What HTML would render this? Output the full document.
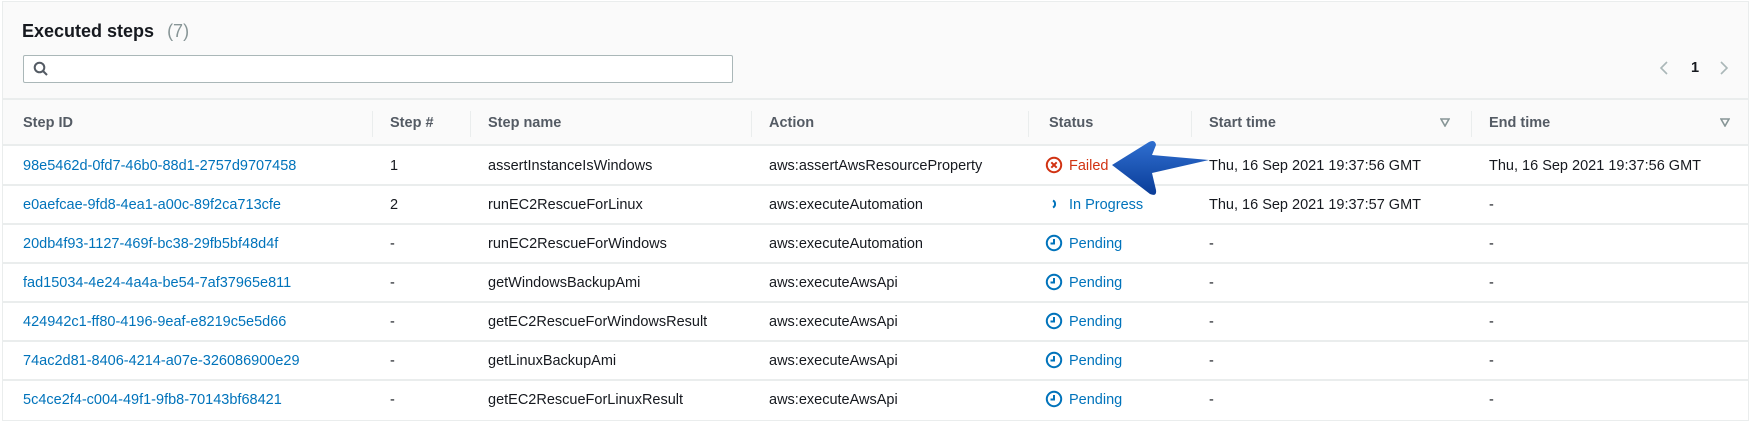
<!DOCTYPE html>
<html><head><meta charset="utf-8"><style>
*{margin:0;padding:0;box-sizing:border-box}
body{width:1750px;height:417px;overflow:hidden;background:#fff;font-family:"Liberation Sans",sans-serif;font-size:14.5px;color:#16191f;position:relative}
.frame{position:absolute;left:2px;top:1px;width:1747px;height:420px;border:1px solid #eaeded;background:#fff}
.top{position:absolute;left:3px;top:2px;width:1745px;height:143px;background:#fafafa}
.abs{position:absolute;white-space:nowrap}
.hline{position:absolute;left:3px;width:1745px;height:2px;background:#eaeded}
.th{font-weight:bold;color:#545b64;top:115px}
.vd{position:absolute;top:111px;width:1px;height:26px;background:#eaeded}
.link{color:#0073bb}
</style></head><body>
<div class="frame"></div>
<div class="top"></div>
<div class="abs" style="left:22px;top:21px;font-size:18px;font-weight:bold">Executed steps <span style="font-weight:normal;color:#879596;margin-left:8px">(7)</span></div>
<div class="abs" style="left:23px;top:55px;width:710px;height:28px;border:1px solid #aab7b8;border-radius:2px;background:#fff"></div>
<svg class="abs" style="left:33px;top:61px" width="16" height="16" viewBox="0 0 16 16"><circle cx="6.5" cy="6.5" r="4.8" fill="none" stroke="#545b64" stroke-width="2"/><line x1="10" y1="10" x2="14" y2="14" stroke="#545b64" stroke-width="2"/></svg>
<svg class="abs" style="left:1658px;top:60px" width="12" height="16"><polyline points="9,2 3,8 9,14" fill="none" stroke="#aab7b8" stroke-width="1.6"/></svg>
<div class="abs" style="left:1691px;top:60px;font-weight:bold">1</div>
<svg class="abs" style="left:1718px;top:60px" width="12" height="16"><polyline points="3,2 9,8 3,14" fill="none" stroke="#aab7b8" stroke-width="1.6"/></svg>
<div class="hline" style="top:98px"></div>
<div class="abs th" style="left:23px">Step ID</div>
<div class="abs th" style="left:390px">Step #</div>
<div class="abs th" style="left:488px">Step name</div>
<div class="abs th" style="left:769px">Action</div>
<div class="abs th" style="left:1049px">Status</div>
<div class="abs th" style="left:1209px">Start time</div>
<div class="abs th" style="left:1489px">End time</div>
<div class="vd" style="left:372px"></div><div class="vd" style="left:470px"></div><div class="vd" style="left:751px"></div><div class="vd" style="left:1028px"></div><div class="vd" style="left:1191px"></div><div class="vd" style="left:1471px"></div>
<svg class="abs" style="left:1440px;top:118px" width="10" height="9"><polygon points="1,1 9,1 5,8" fill="none" stroke="#879596" stroke-width="1.6"/></svg>
<svg class="abs" style="left:1720px;top:118px" width="10" height="9"><polygon points="1,1 9,1 5,8" fill="none" stroke="#879596" stroke-width="1.6"/></svg>
<div class="hline" style="top:144px"></div>
<div class="hline" style="top:184px"></div>
<div class="hline" style="top:223px"></div>
<div class="hline" style="top:262px"></div>
<div class="hline" style="top:301px"></div>
<div class="hline" style="top:340px"></div>
<div class="hline" style="top:379px"></div>

<div class="abs link" style="left:23px;top:158px">98e5462d-0fd7-46b0-88d1-2757d9707458</div>
<div class="abs" style="left:390px;top:158px">1</div>
<div class="abs" style="left:488px;top:158px">assertInstanceIsWindows</div>
<div class="abs" style="left:769px;top:158px">aws:assertAwsResourceProperty</div>
<svg class="abs" style="left:1045px;top:156px" width="18" height="18"><circle cx="9" cy="9" r="7.2" fill="none" stroke="#d13212" stroke-width="2"/><path d="M6.3 6.3L11.7 11.7M11.7 6.3L6.3 11.7" stroke="#d13212" stroke-width="2"/></svg>
<div class="abs" style="left:1069px;top:158px;color:#d13212">Failed</div>
<div class="abs" style="left:1209px;top:158px">Thu, 16 Sep 2021 19:37:56 GMT</div>
<div class="abs" style="left:1489px;top:158px">Thu, 16 Sep 2021 19:37:56 GMT</div>

<div class="abs link" style="left:23px;top:197px">e0aefcae-9fd8-4ea1-a00c-89f2ca713cfe</div>
<div class="abs" style="left:390px;top:197px">2</div>
<div class="abs" style="left:488px;top:197px">runEC2RescueForLinux</div>
<div class="abs" style="left:769px;top:197px">aws:executeAutomation</div>
<svg class="abs" style="left:1050px;top:197px" width="10" height="14"><path d="M3 3.5A4 4 0 0 1 3 10.5" fill="none" stroke="#0073bb" stroke-width="2"/></svg>
<div class="abs link" style="left:1069px;top:197px">In Progress</div>
<div class="abs" style="left:1209px;top:197px">Thu, 16 Sep 2021 19:37:57 GMT</div>
<div class="abs" style="left:1489px;top:197px">-</div>

<div class="abs link" style="left:23px;top:236px">20db4f93-1127-469f-bc38-29fb5bf48d4f</div>
<div class="abs link" style="left:23px;top:275px">fad15034-4e24-4a4a-be54-7af37965e811</div>
<div class="abs link" style="left:23px;top:314px">424942c1-ff80-4196-9eaf-e8219c5e5d66</div>
<div class="abs link" style="left:23px;top:353px">74ac2d81-8406-4214-a07e-326086900e29</div>
<div class="abs link" style="left:23px;top:392px">5c4ce2f4-c004-49f1-9fb8-70143bf68421</div>
<div class="abs" style="left:488px;top:236px">runEC2RescueForWindows</div>
<div class="abs" style="left:488px;top:275px">getWindowsBackupAmi</div>
<div class="abs" style="left:488px;top:314px">getEC2RescueForWindowsResult</div>
<div class="abs" style="left:488px;top:353px">getLinuxBackupAmi</div>
<div class="abs" style="left:488px;top:392px">getEC2RescueForLinuxResult</div>
<div class="abs" style="left:769px;top:236px">aws:executeAutomation</div>
<div class="abs" style="left:769px;top:275px">aws:executeAwsApi</div>
<div class="abs" style="left:769px;top:314px">aws:executeAwsApi</div>
<div class="abs" style="left:769px;top:353px">aws:executeAwsApi</div>
<div class="abs" style="left:769px;top:392px">aws:executeAwsApi</div>
<div class="abs" style="left:390px;top:236px">-</div><div class="abs" style="left:1209px;top:236px">-</div><div class="abs" style="left:1489px;top:236px">-</div>
<div class="abs" style="left:390px;top:275px">-</div><div class="abs" style="left:1209px;top:275px">-</div><div class="abs" style="left:1489px;top:275px">-</div>
<div class="abs" style="left:390px;top:314px">-</div><div class="abs" style="left:1209px;top:314px">-</div><div class="abs" style="left:1489px;top:314px">-</div>
<div class="abs" style="left:390px;top:353px">-</div><div class="abs" style="left:1209px;top:353px">-</div><div class="abs" style="left:1489px;top:353px">-</div>
<div class="abs" style="left:390px;top:392px">-</div><div class="abs" style="left:1209px;top:392px">-</div><div class="abs" style="left:1489px;top:392px">-</div>

<svg class="abs" style="left:1045px;top:234px" width="18" height="18"><circle cx="9" cy="9" r="7.2" fill="none" stroke="#0073bb" stroke-width="2"/><path d="M9 5V9.5H5.5" fill="none" stroke="#0073bb" stroke-width="2"/></svg>
<div class="abs link" style="left:1069px;top:236px">Pending</div>
<svg class="abs" style="left:1045px;top:273px" width="18" height="18"><circle cx="9" cy="9" r="7.2" fill="none" stroke="#0073bb" stroke-width="2"/><path d="M9 5V9.5H5.5" fill="none" stroke="#0073bb" stroke-width="2"/></svg>
<div class="abs link" style="left:1069px;top:275px">Pending</div>
<svg class="abs" style="left:1045px;top:312px" width="18" height="18"><circle cx="9" cy="9" r="7.2" fill="none" stroke="#0073bb" stroke-width="2"/><path d="M9 5V9.5H5.5" fill="none" stroke="#0073bb" stroke-width="2"/></svg>
<div class="abs link" style="left:1069px;top:314px">Pending</div>
<svg class="abs" style="left:1045px;top:351px" width="18" height="18"><circle cx="9" cy="9" r="7.2" fill="none" stroke="#0073bb" stroke-width="2"/><path d="M9 5V9.5H5.5" fill="none" stroke="#0073bb" stroke-width="2"/></svg>
<div class="abs link" style="left:1069px;top:353px">Pending</div>
<svg class="abs" style="left:1045px;top:390px" width="18" height="18"><circle cx="9" cy="9" r="7.2" fill="none" stroke="#0073bb" stroke-width="2"/><path d="M9 5V9.5H5.5" fill="none" stroke="#0073bb" stroke-width="2"/></svg>
<div class="abs link" style="left:1069px;top:392px">Pending</div>

<svg class="abs" style="left:1105px;top:136px" width="110" height="66" viewBox="0 0 110 66">
<defs><linearGradient id="g" x1="0" y1="0" x2="0" y2="1"><stop offset="0" stop-color="#2f6fd0"/><stop offset="1" stop-color="#0a3c98"/></linearGradient></defs>
<path d="M7 29 L44 6 Q50 3 51 9 L47 19 L104 24 L47 37 L51 54 Q52 61 45 58 Z" fill="url(#g)"/>
</svg>
</body></html>
